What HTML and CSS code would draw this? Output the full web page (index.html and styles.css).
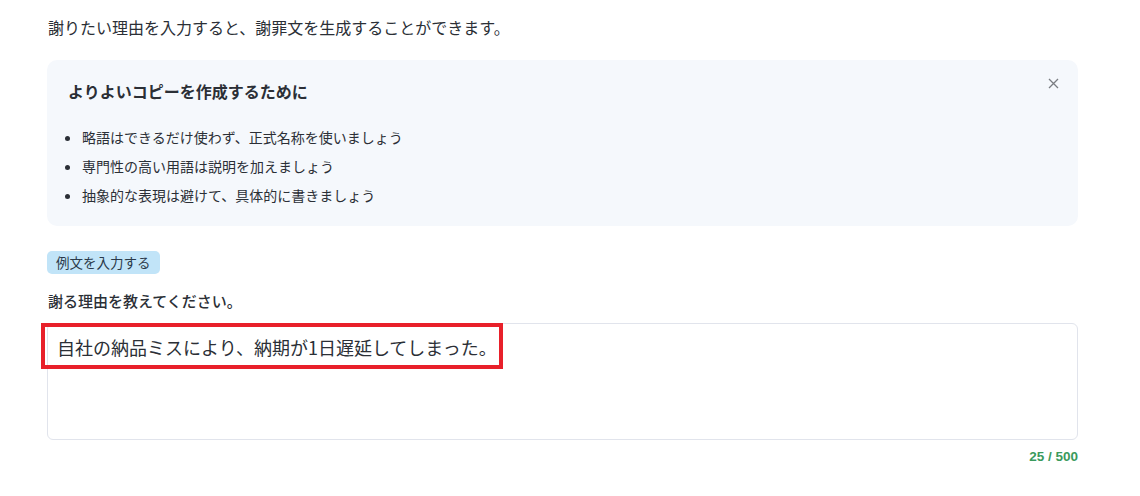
FILE: index.html
```html
<!DOCTYPE html>
<html lang="ja">
<head>
<meta charset="utf-8">
<link rel="stylesheet" href="styles.css">
</head>
<body>
<main class="page">
  <p class="intro">謝りたい理由を入力すると、謝罪文を生成することができます。</p>
  <section class="tips">
    <h2 class="tips-title">よりよいコピーを作成するために</h2>
    <button class="tips-close" aria-label="閉じる">
      <svg width="11" height="11" viewBox="0 0 11 11"><path d="M1 1 10 10M10 1 1 10" stroke="#7a7d82" stroke-width="1.3" fill="none"/></svg>
    </button>
    <ul class="tips-list">
      <li>略語はできるだけ使わず、正式名称を使いましょう</li>
      <li>専門性の高い用語は説明を加えましょう</li>
      <li>抽象的な表現は避けて、具体的に書きましょう</li>
    </ul>
  </section>
  <button class="example">例文を入力する</button>
  <label class="label" for="reason">謝る理由を教えてください。</label>
  <div class="field">
    <textarea id="reason" class="textarea">自社の納品ミスにより、納期が1日遅延してしまった。</textarea>
    <div class="highlight"></div>
  </div>
  <div class="counter">25 / 500</div>
</main>
</body>
</html>
```

FILE: styles.css
```css
* { box-sizing: border-box; }
html, body { margin: 0; padding: 0; background: #fff; }
body {
  font-family: "Noto Sans CJK JP", "Noto Sans", sans-serif;
  color: #2b2f36;
}
.page {
  width: 1031px;
  margin-left: 47px;
  display: flex;
  flex-direction: column;
  align-items: flex-start;
}
.intro {
  margin: 15px 0 0 1px;
  font-size: 16px;
  line-height: 24px;
}
.tips {
  position: relative;
  align-self: stretch;
  margin-top: 21px;
  height: 166px;
  background: #f5f8fc;
  border-radius: 10px;
  padding: 18px 21px 0;
}
.tips-title {
  margin: 0;
  font-size: 16px;
  font-weight: 700;
  line-height: 26px;
}
.tips-close {
  position: absolute;
  top: 10px;
  right: 12px;
  width: 26px;
  height: 26px;
  border: 0;
  background: transparent;
  padding: 0;
  display: flex;
  align-items: center;
  justify-content: center;
}
.tips-list {
  margin: 19px 0 0;
  padding-left: 14px;
  font-size: 14px;
  line-height: 29px;
}
.tips-list li { padding-left: 0; }
.example {
  margin-top: 25px;
  height: 23px;
  padding: 0 9px;
  border: 0;
  border-radius: 5px;
  background: #c1e4f8;
  color: #2b3a4a;
  font-family: inherit;
  font-size: 13.5px;
  line-height: 23px;
}
.label {
  margin-top: 16px;
  margin-left: 1px;
  font-size: 15px;
  font-weight: 500;
  line-height: 22px;
}
.field {
  position: relative;
  align-self: stretch;
  margin-top: 11px;
}
.textarea {
  display: block;
  width: 100%;
  height: 117px;
  border: 1px solid #e1e4ec;
  border-radius: 6px;
  padding: 10px 9px;
  font-family: inherit;
  font-size: 18px;
  line-height: 26px;
  color: #2b2f36;
  resize: none;
  background: #fff;
}
.highlight {
  position: absolute;
  left: -6px;
  top: 0;
  width: 462px;
  height: 46px;
  border: 4px solid #e8202a;
}
.counter {
  align-self: flex-end;
  margin-top: 8px;
  font-family: "Liberation Sans", Arial, sans-serif;
  font-size: 13.5px;
  font-weight: 700;
  color: #3a9a5c;
  line-height: 17px;
}
```
